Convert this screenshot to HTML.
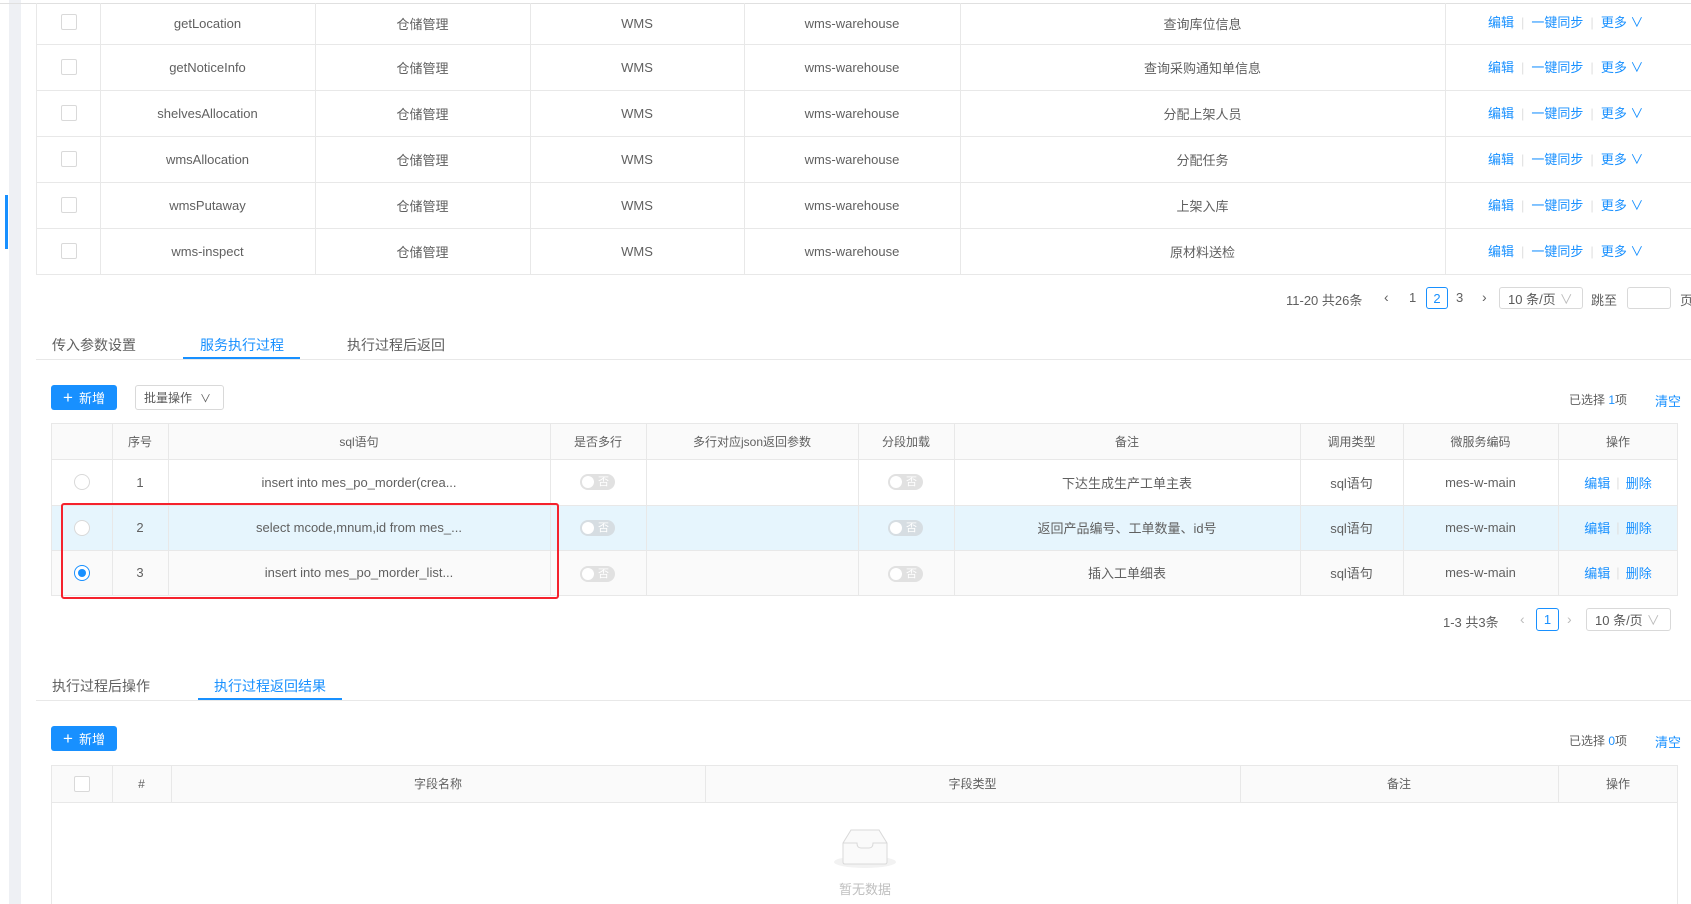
<!DOCTYPE html>
<html><head><meta charset="utf-8"><style>
*{box-sizing:border-box;margin:0;padding:0}
body{width:1691px;height:904px;overflow:hidden;background:#fff;font-family:"Liberation Sans","Noto Sans CJK SC",sans-serif;font-size:13px;color:#606060;position:relative}
.a{position:absolute}
.c{position:absolute;display:flex;align-items:center;justify-content:center;white-space:nowrap}
.hl{position:absolute;height:1px;background:#e8e8e8}
.vl{position:absolute;width:1px;background:#e8e8e8}
.blue{color:#1890ff}
.cb{position:absolute;width:16px;height:16px;border:1px solid #d9d9d9;border-radius:2px;background:#fff}
.sw{position:absolute;width:35px;height:16px;border-radius:8px;background:#e1e1e1}
.sw:before{content:"";position:absolute;left:2px;top:2px;width:12px;height:12px;border-radius:50%;background:#fff}
.sw:after{content:"否";position:absolute;left:18px;top:0;font-size:11px;line-height:16px;color:#fff}
.rd{position:absolute;width:16px;height:16px;border:1px solid #d9d9d9;border-radius:50%;background:#fff}
.btn{position:absolute;background:#1890ff;color:#fff;border-radius:3px;display:flex;align-items:center;justify-content:center;font-size:13px}
.sel{position:absolute;border:1px solid #d9d9d9;border-radius:3px;display:flex;align-items:center;padding-left:8px;font-size:13px;color:#595959}
.act{position:absolute;left:1488px;line-height:16px;color:#1890ff;white-space:nowrap}
.act i{font-style:normal;color:#e0e0e0;margin:0 7px}
</style></head><body>
<div class="a" style="left:9px;top:0;width:12px;height:904px;background:#eef0f4"></div>
<div class="a" style="left:5px;top:195px;width:3px;height:54px;background:#1890ff"></div>
<div class="hl" style="left:0;top:3px;width:1691px;background:#e0e0e0"></div>
<div class="vl" style="left:36px;top:3px;height:272px"></div>
<div class="vl" style="left:100px;top:3px;height:272px"></div>
<div class="vl" style="left:315px;top:3px;height:272px"></div>
<div class="vl" style="left:530px;top:3px;height:272px"></div>
<div class="vl" style="left:744px;top:3px;height:272px"></div>
<div class="vl" style="left:960px;top:3px;height:272px"></div>
<div class="vl" style="left:1445px;top:3px;height:272px"></div>
<div class="hl" style="left:36px;top:44px;width:1655px"></div>
<div class="hl" style="left:36px;top:90px;width:1655px"></div>
<div class="hl" style="left:36px;top:136px;width:1655px"></div>
<div class="hl" style="left:36px;top:182px;width:1655px"></div>
<div class="hl" style="left:36px;top:228px;width:1655px"></div>
<div class="hl" style="left:36px;top:274px;width:1655px"></div>

<div class="cb" style="left:61px;top:14px"></div><div class="c" style="left:100px;top:3px;width:215px;height:41px">getLocation</div><div class="c" style="left:315px;top:3px;width:215px;height:41px">仓储管理</div><div class="c" style="left:530px;top:3px;width:214px;height:41px">WMS</div><div class="c" style="left:744px;top:3px;width:216px;height:41px">wms-warehouse</div><div class="c" style="left:960px;top:3px;width:485px;height:41px">查询库位信息</div>
<div class="cb" style="left:61px;top:59px"></div><div class="c" style="left:100px;top:44px;width:215px;height:46px">getNoticeInfo</div><div class="c" style="left:315px;top:44px;width:215px;height:46px">仓储管理</div><div class="c" style="left:530px;top:44px;width:214px;height:46px">WMS</div><div class="c" style="left:744px;top:44px;width:216px;height:46px">wms-warehouse</div><div class="c" style="left:960px;top:44px;width:485px;height:46px">查询采购通知单信息</div>
<div class="cb" style="left:61px;top:105px"></div><div class="c" style="left:100px;top:90px;width:215px;height:46px">shelvesAllocation</div><div class="c" style="left:315px;top:90px;width:215px;height:46px">仓储管理</div><div class="c" style="left:530px;top:90px;width:214px;height:46px">WMS</div><div class="c" style="left:744px;top:90px;width:216px;height:46px">wms-warehouse</div><div class="c" style="left:960px;top:90px;width:485px;height:46px">分配上架人员</div>
<div class="cb" style="left:61px;top:151px"></div><div class="c" style="left:100px;top:136px;width:215px;height:46px">wmsAllocation</div><div class="c" style="left:315px;top:136px;width:215px;height:46px">仓储管理</div><div class="c" style="left:530px;top:136px;width:214px;height:46px">WMS</div><div class="c" style="left:744px;top:136px;width:216px;height:46px">wms-warehouse</div><div class="c" style="left:960px;top:136px;width:485px;height:46px">分配任务</div>
<div class="cb" style="left:61px;top:197px"></div><div class="c" style="left:100px;top:182px;width:215px;height:46px">wmsPutaway</div><div class="c" style="left:315px;top:182px;width:215px;height:46px">仓储管理</div><div class="c" style="left:530px;top:182px;width:214px;height:46px">WMS</div><div class="c" style="left:744px;top:182px;width:216px;height:46px">wms-warehouse</div><div class="c" style="left:960px;top:182px;width:485px;height:46px">上架入库</div>
<div class="cb" style="left:61px;top:243px"></div><div class="c" style="left:100px;top:228px;width:215px;height:46px">wms-inspect</div><div class="c" style="left:315px;top:228px;width:215px;height:46px">仓储管理</div><div class="c" style="left:530px;top:228px;width:214px;height:46px">WMS</div><div class="c" style="left:744px;top:228px;width:216px;height:46px">wms-warehouse</div><div class="c" style="left:960px;top:228px;width:485px;height:46px">原材料送检</div>

<div class="act" style="top:15px">编辑<i>|</i>一键同步<i>|</i>更多 ∨</div>
<div class="act" style="top:60px">编辑<i>|</i>一键同步<i>|</i>更多 ∨</div>
<div class="act" style="top:106px">编辑<i>|</i>一键同步<i>|</i>更多 ∨</div>
<div class="act" style="top:152px">编辑<i>|</i>一键同步<i>|</i>更多 ∨</div>
<div class="act" style="top:198px">编辑<i>|</i>一键同步<i>|</i>更多 ∨</div>
<div class="act" style="top:244px">编辑<i>|</i>一键同步<i>|</i>更多 ∨</div>

<div class="a" style="left:1286px;top:290px">11-20 共26条</div>
<div class="a" style="left:1384px;top:289px;font-size:14px">‹</div>
<div class="a" style="left:1409px;top:290px">1</div>
<div class="c blue" style="left:1426px;top:287px;width:22px;height:22px;border:1px solid #1890ff;border-radius:3px">2</div>
<div class="a" style="left:1456px;top:290px">3</div>
<div class="a" style="left:1482px;top:289px;font-size:14px">›</div>
<div class="sel" style="left:1499px;top:287px;width:84px;height:22px">10 条/页 <span style="color:#bbb;margin-left:4px">∨</span></div>
<div class="a" style="left:1591px;top:290px">跳至</div>
<div class="a" style="left:1627px;top:287px;width:44px;height:22px;border:1px solid #d9d9d9;border-radius:3px"></div>
<div class="a" style="left:1680px;top:290px">页</div>

<div class="hl" style="left:36px;top:359px;width:1655px"></div>
<div class="a" style="left:52px;top:335px;font-size:14px">传入参数设置</div>
<div class="a blue" style="left:200px;top:335px;font-size:14px">服务执行过程</div>
<div class="a" style="left:347px;top:335px;font-size:14px">执行过程后返回</div>
<div class="a" style="left:183px;top:357px;width:117px;height:2px;background:#1890ff"></div>

<div class="btn" style="left:51px;top:385px;width:66px;height:25px"><b style="font-size:17px;margin-right:6px;font-weight:normal">+</b>新增</div>
<div class="sel" style="left:135px;top:385px;width:89px;height:25px;font-size:12px">批量操作 <span style="margin-left:8px;font-size:11px">∨</span></div>
<div class="a" style="left:1569px;top:391px;font-size:12px">已选择 <span class="blue">1</span>项</div>
<div class="a blue" style="left:1655px;top:391px">清空</div>

<div class="a" style="left:51px;top:423px;width:1627px;height:36px;background:#fafafa"></div>
<div class="a" style="left:51px;top:505px;width:1627px;height:45px;background:#e6f5fd"></div>
<div class="a" style="left:51px;top:550px;width:1627px;height:45px;background:#fafafa"></div>
<div class="hl" style="left:51px;top:423px;width:1627px"></div>
<div class="hl" style="left:51px;top:459px;width:1627px"></div>
<div class="hl" style="left:51px;top:505px;width:1627px"></div>
<div class="hl" style="left:51px;top:550px;width:1627px"></div>
<div class="hl" style="left:51px;top:595px;width:1627px"></div>
<div class="vl" style="left:51px;top:423px;height:172px"></div>
<div class="vl" style="left:112px;top:423px;height:172px"></div>
<div class="vl" style="left:168px;top:423px;height:172px"></div>
<div class="vl" style="left:550px;top:423px;height:172px"></div>
<div class="vl" style="left:646px;top:423px;height:172px"></div>
<div class="vl" style="left:858px;top:423px;height:172px"></div>
<div class="vl" style="left:954px;top:423px;height:172px"></div>
<div class="vl" style="left:1300px;top:423px;height:172px"></div>
<div class="vl" style="left:1403px;top:423px;height:172px"></div>
<div class="vl" style="left:1558px;top:423px;height:172px"></div>
<div class="vl" style="left:1677px;top:423px;height:172px"></div>
<div class="c" style="left:112px;top:423px;width:56px;height:36px;font-size:12px">序号</div>
<div class="c" style="left:168px;top:423px;width:382px;height:36px;font-size:12px">sql语句</div>
<div class="c" style="left:550px;top:423px;width:96px;height:36px;font-size:12px">是否多行</div>
<div class="c" style="left:646px;top:423px;width:212px;height:36px;font-size:12px">多行对应json返回参数</div>
<div class="c" style="left:858px;top:423px;width:96px;height:36px;font-size:12px">分段加载</div>
<div class="c" style="left:954px;top:423px;width:346px;height:36px;font-size:12px">备注</div>
<div class="c" style="left:1300px;top:423px;width:103px;height:36px;font-size:12px">调用类型</div>
<div class="c" style="left:1403px;top:423px;width:155px;height:36px;font-size:12px">微服务编码</div>
<div class="c" style="left:1558px;top:423px;width:120px;height:36px;font-size:12px">操作</div>

<div class="rd" style="left:74px;top:474px"></div>
<div class="rd" style="left:74px;top:520px"></div>
<div class="rd" style="left:74px;top:565px;border-color:#1890ff"><div style="position:absolute;left:3px;top:3px;width:8px;height:8px;border-radius:50%;background:#1890ff"></div></div>

<div class="c" style="left:112px;top:459px;width:56px;height:46px">1</div>
<div class="c" style="left:168px;top:459px;width:382px;height:46px">insert into mes_po_morder(crea...</div>
<div class="sw" style="left:580px;top:474px"></div><div class="sw" style="left:888px;top:474px"></div>
<div class="c" style="left:954px;top:459px;width:346px;height:46px">下达生成生产工单主表</div>
<div class="c" style="left:1300px;top:459px;width:103px;height:46px">sql语句</div>
<div class="c" style="left:1403px;top:459px;width:155px;height:46px">mes-w-main</div>
<div class="c blue" style="left:1558px;top:459px;width:120px;height:46px">编辑 <span style="color:#e0e0e0;margin:0 6px">|</span> 删除</div>

<div class="c" style="left:112px;top:505px;width:56px;height:45px">2</div>
<div class="c" style="left:168px;top:505px;width:382px;height:45px">select mcode,mnum,id from mes_...</div>
<div class="sw" style="left:580px;top:520px;background:#d6dde2"></div><div class="sw" style="left:888px;top:520px;background:#d6dde2"></div>
<div class="c" style="left:954px;top:505px;width:346px;height:45px">返回产品编号、工单数量、id号</div>
<div class="c" style="left:1300px;top:505px;width:103px;height:45px">sql语句</div>
<div class="c" style="left:1403px;top:505px;width:155px;height:45px">mes-w-main</div>
<div class="c blue" style="left:1558px;top:505px;width:120px;height:45px">编辑 <span style="color:#e0e0e0;margin:0 6px">|</span> 删除</div>

<div class="c" style="left:112px;top:550px;width:56px;height:45px">3</div>
<div class="c" style="left:168px;top:550px;width:382px;height:45px">insert into mes_po_morder_list...</div>
<div class="sw" style="left:580px;top:566px"></div><div class="sw" style="left:888px;top:566px"></div>
<div class="c" style="left:954px;top:550px;width:346px;height:45px">插入工单细表</div>
<div class="c" style="left:1300px;top:550px;width:103px;height:45px">sql语句</div>
<div class="c" style="left:1403px;top:550px;width:155px;height:45px">mes-w-main</div>
<div class="c blue" style="left:1558px;top:550px;width:120px;height:45px">编辑 <span style="color:#e0e0e0;margin:0 6px">|</span> 删除</div>

<div class="a" style="left:61px;top:503px;width:498px;height:96px;border:2px solid #f5222d;border-radius:3px"></div>

<div class="a" style="left:1443px;top:612px">1-3 共3条</div>
<div class="a" style="left:1520px;top:611px;font-size:14px;color:#bbb">‹</div>
<div class="c blue" style="left:1536px;top:608px;width:23px;height:23px;border:1px solid #1890ff;border-radius:3px">1</div>
<div class="a" style="left:1567px;top:611px;font-size:14px;color:#bbb">›</div>
<div class="sel" style="left:1586px;top:608px;width:85px;height:23px">10 条/页 <span style="color:#bbb;margin-left:4px">∨</span></div>

<div class="hl" style="left:36px;top:700px;width:1655px"></div>
<div class="a" style="left:52px;top:676px;font-size:14px">执行过程后操作</div>
<div class="a blue" style="left:214px;top:676px;font-size:14px">执行过程返回结果</div>
<div class="a" style="left:198px;top:698px;width:144px;height:2px;background:#1890ff"></div>

<div class="btn" style="left:51px;top:726px;width:66px;height:25px"><b style="font-size:17px;margin-right:6px;font-weight:normal">+</b>新增</div>
<div class="a" style="left:1569px;top:732px;font-size:12px">已选择 <span class="blue">0</span>项</div>
<div class="a blue" style="left:1655px;top:732px">清空</div>

<div class="a" style="left:51px;top:765px;width:1627px;height:37px;background:#fafafa"></div>
<div class="hl" style="left:51px;top:765px;width:1627px"></div>
<div class="hl" style="left:51px;top:802px;width:1627px"></div>
<div class="vl" style="left:51px;top:765px;height:139px"></div>
<div class="vl" style="left:1677px;top:765px;height:139px"></div>
<div class="vl" style="left:112px;top:765px;height:37px"></div>
<div class="vl" style="left:171px;top:765px;height:37px"></div>
<div class="vl" style="left:705px;top:765px;height:37px"></div>
<div class="vl" style="left:1240px;top:765px;height:37px"></div>
<div class="vl" style="left:1558px;top:765px;height:37px"></div>
<div class="cb" style="left:74px;top:776px"></div>
<div class="c" style="left:112px;top:765px;width:59px;height:37px;font-size:12px">#</div>
<div class="c" style="left:171px;top:765px;width:534px;height:37px;font-size:12px">字段名称</div>
<div class="c" style="left:705px;top:765px;width:535px;height:37px;font-size:12px">字段类型</div>
<div class="c" style="left:1240px;top:765px;width:318px;height:37px;font-size:12px">备注</div>
<div class="c" style="left:1558px;top:765px;width:120px;height:37px;font-size:12px">操作</div>

<svg class="a" style="left:832px;top:826px" width="66" height="44" viewBox="0 0 66 44">
<ellipse cx="33" cy="36" rx="31" ry="6" fill="#f2f2f2"/>
<path d="M11 17 L19 4 H47 L55 17 V36 Q55 38 53 38 H13 Q11 38 11 36 Z" fill="#fafafa" stroke="#d9d9d9"/>
<path d="M11 17 H25 Q25 22 29 22 H37 Q41 22 41 17 H55" fill="none" stroke="#d9d9d9"/>
</svg>
<div class="c" style="left:820px;top:879px;width:90px;height:18px;color:#bfbfbf">暂无数据</div>
</body></html>
